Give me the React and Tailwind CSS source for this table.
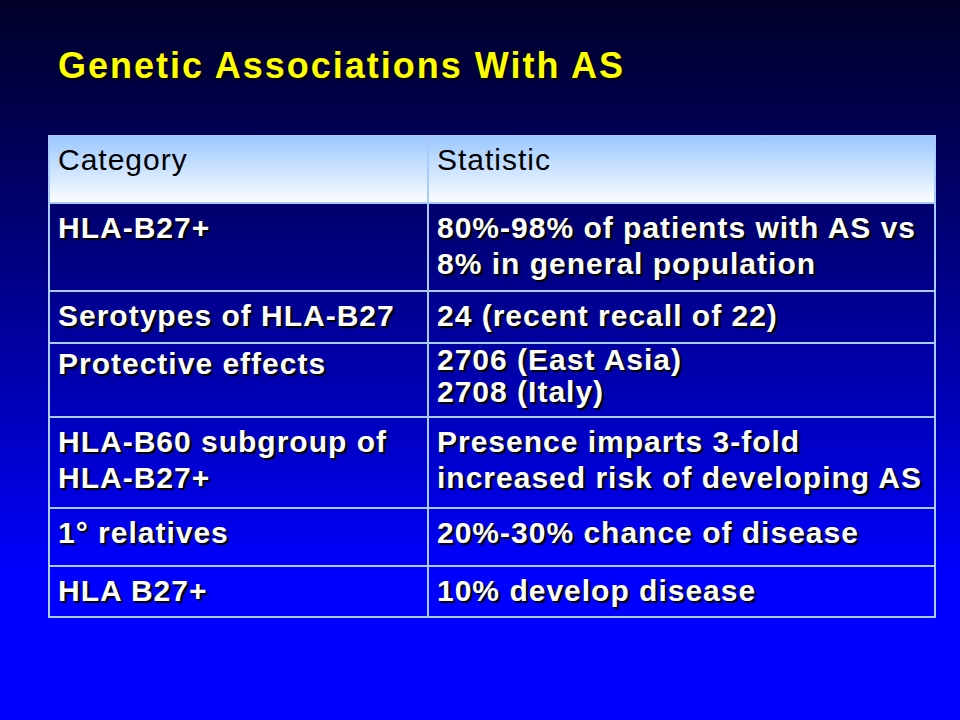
import React from "react";

const rows = [
  { h: "h-[88px]", left: ["HLA-B27+"], right: ["80%-98% of patients with AS vs", "8% in general population"] },
  { h: "h-[52px]", left: ["Serotypes of HLA-B27"], right: ["24 (recent recall of 22)"] },
  { h: "h-[74px]", left: ["Protective effects"], right: ["2706 (East Asia)", "2708 (Italy)"], tight: true },
  { h: "h-[91px]", left: ["HLA-B60 subgroup of", "HLA-B27+"], right: ["Presence imparts 3-fold", "increased risk of developing AS"] },
  { h: "h-[58px]", left: ["1° relatives"], right: ["20%-30% chance of disease"] },
  { h: "h-[49px]", left: ["HLA B27+"], right: ["10% develop disease"], last: true },
];

function Cell({ lines, className }) {
  return (
    <div className={className}>
      {lines.map((l) => (
        <div key={l} className="whitespace-nowrap">
          {l}
        </div>
      ))}
    </div>
  );
}

export default function App() {
  return (
    <div className="w-[960px] h-[720px] bg-linear-to-b from-[#000028] to-[#0000ff] to-80% font-['Liberation_Sans',Arial,sans-serif] overflow-hidden">
      <h1 className="pl-[58px] pt-[45px] h-[135px] text-[36px] leading-[42px] font-bold tracking-[2px] text-[#ffff00] [text-shadow:2px_2px_1px_#000000]">
        Genetic Associations With AS
      </h1>
      <div className="ml-[48px] w-[888px] border-2 border-[#a8ccff]">
        <div className="flex h-[67px] border-b-2 border-[#a8ccff] bg-linear-to-b from-[#9cc8ff] to-[#fbfdff] text-black text-[30px] leading-[36px] tracking-[1px]">
          <div className="w-[379px] border-r-2 border-[#a8ccff] pl-[8px] pt-[5px]">Category</div>
          <div className="flex-1 pl-[8px] pt-[5px]">Statistic</div>
        </div>
        {rows.map((r, i) => (
          <div
            key={i}
            className={`flex ${r.h} ${r.last ? "" : "border-b-2"} border-[#a8ccff] text-white font-bold text-[30px] tracking-[1px] [text-shadow:2px_2px_1px_#000000]`}
          >
            <Cell
              lines={r.left}
              className={`w-[379px] border-r-2 border-[#a8ccff] pl-[8px] leading-[36px] ${r.tight ? "pt-[2px]" : "pt-[6px]"}`}
            />
            <Cell
              lines={r.right}
              className={`flex-1 pl-[8px] ${r.tight ? "leading-[32px] pt-0" : "leading-[36px] pt-[6px]"}`}
            />
          </div>
        ))}
      </div>
    </div>
  );
}
